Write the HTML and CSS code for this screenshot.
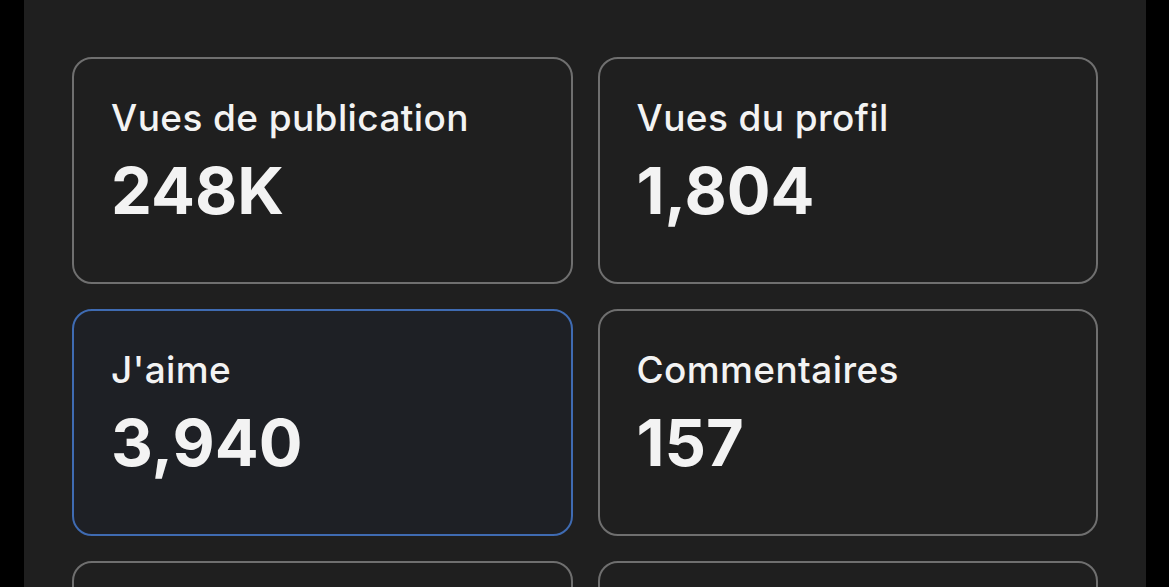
FILE: index.html
```html
<!DOCTYPE html>
<html lang="fr">
<head>
<meta charset="utf-8">
<title>Statistiques</title>
<link rel="stylesheet" href="styles.css">
</head>
<body>
<main class="panel">
  <div class="grid">
    <section class="card">
      <div class="label">Vues de publication</div>
      <div class="value">248K</div>
    </section>
    <section class="card">
      <div class="label">Vues du profil</div>
      <div class="value">1,804</div>
    </section>
    <section class="card card-active">
      <div class="label">J'aime</div>
      <div class="value">3,940</div>
    </section>
    <section class="card">
      <div class="label">Commentaires</div>
      <div class="value">157</div>
    </section>
    <section class="card"></section>
    <section class="card"></section>
  </div>
</main>
</body>
</html>
```

FILE: styles.css
```css
html, body {
  margin: 0;
  padding: 0;
  background: #000;
  height: 100%;
  overflow: hidden;
}
body {
  font-family: Inter, "Noto Sans", sans-serif;
  color: #f3f3f3;
}
.panel {
  margin: 0 23px 0 24px;
  background: #1f1f1f;
  min-height: 100%;
  padding: 57px 48px 0;
  box-sizing: border-box;
}
.grid {
  display: grid;
  grid-template-columns: 1fr 1fr;
  column-gap: 25px;
  row-gap: 25px;
}
.card {
  border: 2px solid #6f6f6f;
  border-radius: 20px;
  background: #1f1f1f;
  padding: 37px 37px 0;
  height: 227px;
  box-sizing: border-box;
}
.card-active {
  border-color: #3f6bb2;
  background: #1e2025;
}
.label {
  font-size: 37px;
  line-height: 44px;
  font-weight: 500;
  letter-spacing: 0.4px;
}
.value {
  margin-top: 11px;
  font-size: 65px;
  line-height: 80px;
  font-weight: 700;
}
```
